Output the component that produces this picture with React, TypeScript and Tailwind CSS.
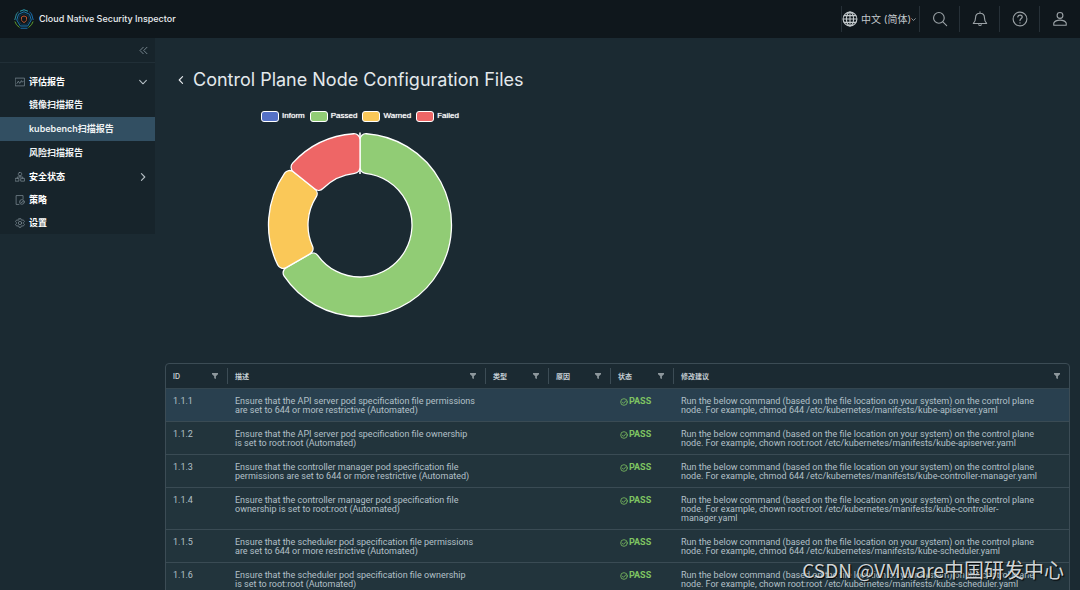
import type { ReactNode } from "react";

interface CheckRow {
  id: string;
  description: string;
  remediation: string;
}

interface Slice {
  name: string;
  value: number;
  color: string;
}

const rows: CheckRow[] = [
  {
    id: "1.1.1",
    description: "Ensure that the API server pod specification file permissions are set to 644 or more restrictive (Automated)",
    remediation: "Run the below command (based on the file location on your system) on the control plane node. For example, chmod 644 /etc/kubernetes/manifests/kube-apiserver.yaml",
  },
  {
    id: "1.1.2",
    description: "Ensure that the API server pod specification file ownership is\u00a0set to root:root (Automated)",
    remediation: "Run the below command (based on the file location on your system) on the control plane node. For example, chown root:root /etc/kubernetes/manifests/kube-apiserver.yaml",
  },
  {
    id: "1.1.3",
    description: "Ensure that the controller manager pod specification file permissions are set to 644 or more restrictive (Automated)",
    remediation: "Run the below command (based on the file location on your system) on the control plane node. For example, chmod 644 /etc/kubernetes/manifests/kube-controller-manager.yaml",
  },
  {
    id: "1.1.4",
    description: "Ensure that the controller manager pod specification file ownership is\u00a0set to root:root (Automated)",
    remediation: "Run the below command (based on the file location on your system) on the control plane node. For example, chown root:root /etc/kubernetes/manifests/kube-controller-manager.yaml",
  },
  {
    id: "1.1.5",
    description: "Ensure that the scheduler pod specification file permissions are set to 644 or more restrictive (Automated)",
    remediation: "Run the below command (based on the file location on your system) on the control plane node. For example, chmod 644 /etc/kubernetes/manifests/kube-scheduler.yaml",
  },
  {
    id: "1.1.6",
    description: "Ensure that the scheduler pod specification file ownership is\u00a0set to root:root (Automated)",
    remediation: "Run the below command (based on the file location on your system) on the control plane node. For example, chown root:root /etc/kubernetes/manifests/kube-scheduler.yaml",
  },
];

const columns = [
  { label: "ID", width: "w-[61px]" },
  { label: "描述", width: "w-[258px]" },
  { label: "类型", width: "w-[63px]" },
  { label: "原因", width: "w-[62px]" },
  { label: "状态", width: "w-[63px]" },
  { label: "修改建议", width: "" },
];

const slices: Slice[] = [
  { name: "Inform", value: 0, color: "#5470c6" },
  { name: "Passed", value: 14, color: "#91cc75" },
  { name: "Warned", value: 4, color: "#fac858" },
  { name: "Failed", value: 3, color: "#ee6666" },
];

const OUTER = 91.5;
const INNER = 52;
const CORNER = 6;

const point = (radius: number, angle: number) =>
  `${(radius * Math.sin(angle)).toFixed(2)} ${(-radius * Math.cos(angle)).toFixed(2)}`;

// ring sector with rounded corners, angles run clockwise from 12 o'clock
const sectorPath = (start: number, end: number) => {
  const outerShift = Math.asin(CORNER / (OUTER - CORNER));
  const innerShift = Math.asin(CORNER / (INNER + CORNER));
  const outerSide = Math.sqrt((OUTER - CORNER) ** 2 - CORNER ** 2);
  const innerSide = Math.sqrt((INNER + CORNER) ** 2 - CORNER ** 2);
  const large = end - start > Math.PI ? 1 : 0;
  const corner = `A ${CORNER} ${CORNER} 0 0 1`;
  return [
    `M ${point(outerSide, start)}`,
    `${corner} ${point(OUTER, start + outerShift)}`,
    `A ${OUTER} ${OUTER} 0 ${large} 1 ${point(OUTER, end - outerShift)}`,
    `${corner} ${point(outerSide, end)}`,
    `L ${point(innerSide, end)}`,
    `${corner} ${point(INNER, end - innerShift)}`,
    `A ${INNER} ${INNER} 0 ${large} 0 ${point(INNER, start + innerShift)}`,
    `${corner} ${point(innerSide, start)}`,
    "Z",
  ].join(" ");
};

const DonutChart = () => {
  const total = slices.reduce((sum, slice) => sum + slice.value, 0);
  let angle = 0;
  return (
    <svg className="w-[188px] h-[188px]" viewBox="-94 -94 188 188" role="img" aria-label="Scan results">
      {slices.map(slice => {
        const start = angle;
        angle += (slice.value / total) * Math.PI * 2;
        if (slice.value === 0) {
          return <path key={slice.name} d="M0 -92.5V-51" stroke="#fff" strokeWidth="1.6" />;
        }
        return (
          <path key={slice.name} d={sectorPath(start, angle)} fill={slice.color} stroke="#fff" strokeWidth="1.3" strokeLinejoin="round" />
        );
      })}
    </svg>
  );
};

const Icon = ({ className, children }: { className: string; children: ReactNode }) => (
  <svg className={className} viewBox="0 0 36 36" fill="none" stroke="currentColor" strokeWidth="2.5" strokeLinecap="round" strokeLinejoin="round" aria-hidden="true">
    {children}
  </svg>
);

const Logo = () => (
  <svg className="w-5 h-5" viewBox="0 0 40 40" fill="none" strokeWidth="2" aria-hidden="true">
    <path d="M12 4.500L20 1.500L28 4.500" stroke="#2c9fb0" />
    <path d="M31 6L35 9.500L38.500 22" stroke="#1b6fb0" />
    <path d="M9 6L5 9.500L1.500 22" stroke="#2f8a96" />
    <path d="M1.800 25L5 31.500L11 37" stroke="#5c9a2e" />
    <path d="M38.200 25L35 31.500L29 37" stroke="#5c9a2e" />
    <path d="M13 38.500H27" stroke="#1d6fa8" />
    <path d="M20 5.500L31 10.500L34.500 22L27.500 34H12.500L5.500 22L9 10.500Z" stroke="#1a76ad" />
    <path d="M20 9.500L28.500 13L31 22L26 30.500H14L9 22L11.500 13Z" stroke="#123a56" strokeWidth="1.5" />
    <path d="M20 14L25 16V21C25 24 23 25.500 20 27C17 25.500 15 24 15 21V16Z" stroke="#b9532e" />
  </svg>
);

const ReportIcon = () => (
  <Icon className="w-[10px] h-[10px] text-[#82919a]">
    <rect x="2" y="4" width="32" height="28" />
    <path d="M7 23L12 15L17 23L23 13L26 19L30 15" />
  </Icon>
);

const ClusterIcon = () => (
  <Icon className="w-[10px] h-[10px] text-[#82919a]">
    <rect x="12" y="2" width="12" height="11" rx="4" />
    <path d="M18 13V18M8 23V18H28V23" />
    <rect x="2" y="23" width="12" height="10" />
    <rect x="22" y="23" width="12" height="10" />
  </Icon>
);

const PolicyIcon = () => (
  <Icon className="w-[10px] h-[10px] text-[#82919a]">
    <path d="M14 34H4V2H29V14" />
    <circle cx="25" cy="25" r="8.500" />
    <path d="M21 25L24 28L29 22" />
  </Icon>
);

const CogIcon = () => (
  <Icon className="w-[10px] h-[10px] text-[#82919a]">
    <path d="M14.500 2.500H21.500L22.500 7L25 8.300L29.500 6.500L34 12.500L31 16V20L34 23.500L29.500 29.500L25 27.700L22.500 29L21.500 33.500H14.500L13.500 29L11 27.700L6.500 29.500L2 23.500L5 20V16L2 12.500L6.500 6.500L11 8.300L13.500 7Z" />
    <circle cx="18" cy="18" r="6" />
  </Icon>
);

const GlobeIcon = () => (
  <Icon className="w-4 h-4 text-[#c3c9cc]">
    <circle cx="18" cy="18" r="15.500" />
    <ellipse cx="18" cy="18" rx="8" ry="15.500" />
    <path d="M18 3V33M3 18H33M5 10.500H31M5 25.500H31" />
  </Icon>
);

const FilterIcon = () => (
  <svg className="w-[6px] h-[6px]" viewBox="0 0 12 12" fill="#8d979c" aria-hidden="true">
    <path d="M0 0H12V2.500L7.800 6.500V12L4.400 10.500V6.500L0 2.500Z" />
  </svg>
);

const HeaderButton = ({ label, children }: { label: string; children: ReactNode }) => (
  <button type="button" aria-label={label} className="flex w-10 h-[26px] items-center justify-center border-l border-[#263037] text-[#9ba2a6]">
    {children}
  </button>
);

const Header = () => (
  <header className="flex h-[38px] shrink-0 items-center bg-[#0f171c] pl-[14px] pr-px">
    <a href="#home" className="flex items-center gap-[5px] text-[9px] font-medium text-[#e9ecef]">
      <Logo />
      Cloud Native Security Inspector
    </a>
    <div className="ml-auto flex items-center">
      <button type="button" className="flex h-[26px] w-[78px] items-center gap-[3px] whitespace-nowrap border-l border-[#263037] text-[10px] text-[#c3c9cc]">
        <GlobeIcon />
        <span className="flex items-center">
          中文 (简体)
          <Icon className="w-[5px] h-[5px]">
            <path d="M5 12L18 25L31 12" strokeWidth="5" />
          </Icon>
        </span>
      </button>
      <HeaderButton label="Search">
        <Icon className="w-4 h-4">
          <circle cx="15.500" cy="15.500" r="12" />
          <path d="M24.500 24.500L33 33" />
        </Icon>
      </HeaderButton>
      <HeaderButton label="Notifications">
        <Icon className="w-4 h-4">
          <path d="M3 28C6 25 8 23 8 15C8 9 12 5 18 5C24 5 28 9 28 15C28 23 30 25 33 28ZM18 5V2M15 31C16 33 20 33 21 31" />
        </Icon>
      </HeaderButton>
      <HeaderButton label="Help">
        <Icon className="w-4 h-4">
          <circle cx="18" cy="18" r="15.500" />
          <path d="M13 13C14 8 23 8 23 13.500C23 17 18 17 18 21.500M18 26.500V27" strokeWidth="2.800" />
        </Icon>
      </HeaderButton>
      <HeaderButton label="Account">
        <Icon className="w-4 h-4">
          <circle cx="18" cy="10" r="6.500" />
          <path d="M4 32V27C6 23 11 20.500 18 20.500C25 20.500 30 23 32 27V32Z" />
        </Icon>
      </HeaderButton>
    </div>
  </header>
);

const NavGroup = ({ icon, label, chevron }: { icon: ReactNode; label: string; chevron?: "down" | "right" }) => (
  <a href="#group" className="flex h-[23px] items-center gap-1 pl-[15px] pr-2 font-bold text-white">
    {icon}
    <span>{label}</span>
    {chevron && (
      <Icon className="ml-auto w-2 h-2 text-[#b4bec4]">
        <path d={chevron === "down" ? "M3 11L18 26L33 11" : "M11 3L26 18L11 33"} strokeWidth="5" />
      </Icon>
    )}
  </a>
);

const NavLink = ({ label, active }: { label: string; active?: boolean }) => (
  <a href="#report" className={`flex h-6 items-center pl-[29px] font-semibold text-[#eef2f4] ${active ? "bg-[#324f62]" : ""}`}>
    {label}
  </a>
);

const Sidebar = () => (
  <nav className="w-[155px] shrink-0 self-start bg-[#17242b] text-[9px]">
    <div className="flex h-[25px] items-center justify-end border-b border-[#212f37] pr-[7px]">
      <button type="button" aria-label="Collapse menu" className="text-[#82919a]">
        <Icon className="w-[9px] h-[9px]">
          <path d="M17 5L4 18L17 31M32 5L19 18L32 31" strokeWidth="3.500" />
        </Icon>
      </button>
    </div>
    <div className="pt-[7px]">
      <NavGroup icon={<ReportIcon />} label="评估报告" chevron="down" />
      <NavLink label="镜像扫描报告" />
      <NavLink label="kubebench扫描报告" active />
      <NavLink label="风险扫描报告" />
      <NavGroup icon={<ClusterIcon />} label="安全状态" chevron="right" />
      <NavGroup icon={<PolicyIcon />} label="策略" />
      <NavGroup icon={<CogIcon />} label="设置" />
    </div>
  </nav>
);

const ResultsTable = () => (
  <div className="rounded-sm border border-[#3c4c55]">
    <table className="w-full table-fixed border-separate border-spacing-0 text-left text-[9px] leading-[9px]">
      <thead>
        <tr>
          {columns.map((column, index) => (
            <th key={column.label} scope="col" className={`h-[25px] border-b border-[#344650] p-0 text-[7px] font-semibold text-[#c5ced4] ${column.width}`}>
              <div className={`flex h-4 items-center justify-between pl-[7px] pr-[9px] ${index > 0 ? "border-l border-[#3c4c55]" : ""}`}>
                {column.label}
                <button type="button" aria-label={`Filter ${column.label}`}>
                  <FilterIcon />
                </button>
              </div>
            </th>
          ))}
        </tr>
      </thead>
      <tbody className="font-[Roboto,sans-serif]">
        {rows.map((row, index) => (
          <tr key={row.id} className={`align-top text-[#b3c0c8] ${index === 0 ? "bg-[#29404f]" : "bg-[#22343c]"}`}>
            <td className="border-b border-[#3a4b54] pt-2 pb-[6px] pl-[7px]">{row.id}</td>
            <td className="border-b border-[#3a4b54] pt-2 pb-[6px] pl-2 pr-[10px]">{row.description}</td>
            <td className="border-b border-[#3a4b54]"></td>
            <td className="border-b border-[#3a4b54]"></td>
            <td className="border-b border-[#3a4b54] pt-2 pb-[6px] pl-[10px]">
              <span className="flex items-center gap-px font-bold text-[#7fc462]">
                <Icon className="w-2 h-2">
                  <circle cx="18" cy="18" r="15" strokeWidth="3.500" />
                  <path d="M10 18L16 24L27 12" strokeWidth="3.500" />
                </Icon>
                PASS
              </span>
            </td>
            <td className="border-b border-[#3a4b54] pt-2 pb-[6px] pl-2 pr-6">{row.remediation}</td>
          </tr>
        ))}
      </tbody>
    </table>
  </div>
);

const App = () => {
  return (
    <div className="relative flex h-screen flex-col overflow-hidden bg-[#1b2a32] font-[Inter,'Noto_Sans_CJK_SC',sans-serif]">
      <Header />
      <div className="flex min-h-0 flex-1">
        <Sidebar />
        <main className="min-w-0 flex-1 px-[10px] pt-7">
          {/* Page title */}
          <div className="flex items-center gap-2 pl-3">
            <button type="button" aria-label="Back" className="text-[#e9ecef]">
              <Icon className="w-2 h-2">
                <path d="M25 3L10 18L25 33" strokeWidth="5" />
              </Icon>
            </button>
            <h1 className="text-[18px] leading-7 text-[#e4e9ec]">Control Plane Node Configuration Files</h1>
          </div>

          {/* Scan summary */}
          <section className="flex h-[269px] w-[390px] flex-col items-center pt-4">
            <ul className="flex gap-[5px] font-['Liberation_Sans',sans-serif] text-[8px] leading-3 text-white">
              {slices.map(slice => (
                <li key={slice.name} className="flex items-center gap-[3px] [text-shadow:0_0_1px_white]">
                  <span className="h-[11px] w-[18px] rounded-[3px] border border-white" style={{ backgroundColor: slice.color }} />
                  {slice.name}
                </li>
              ))}
            </ul>
            <div className="mt-[9px]">
              <DonutChart />
            </div>
          </section>

          <ResultsTable />
        </main>
      </div>
      <div className="absolute right-4 bottom-[6px] font-['Noto_Sans_CJK_SC',sans-serif] text-[20px] leading-7 text-[#d0d4d6] [text-shadow:1px_1px_1px_#000]">
        <span className="text-[19px]">CSDN @VMware</span>中国研发中心
      </div>
    </div>
  );
};

export default App;
